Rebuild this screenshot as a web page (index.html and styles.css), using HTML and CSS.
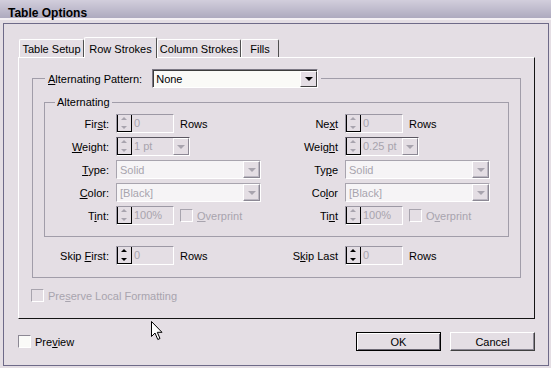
FILE: index.html
```html
<!DOCTYPE html>
<html lang="en">
<head>
    <meta charset="UTF-8">
    <title>Table Options</title>
    <link rel="stylesheet" href="styles.css">
</head>
<body>
    <div class="window">
        <div class="titlebar">Table Options</div>
        <div class="frame">
            <div class="tabs">
                <div class="tab tab-setup">Table Setup</div>
                <div class="tab tab-rows active">Row Strokes</div>
                <div class="tab tab-cols">Column Strokes</div>
                <div class="tab tab-fills">Fills</div>
            </div>

            <div class="panel">
                <fieldset class="group pattern">
                    <legend>
                        <span class="legend-row">
                            <span class="label"><u>A</u>lternating Pattern:</span>
                            <span class="select pattern-select">
                                <span class="value">None</span>
                                <span class="drop"><i class="tri-down"></i></span>
                            </span>
                        </span>
                    </legend>

                    <fieldset class="group alternating">
                        <legend>Alternatin<u>g</u></legend>
                        <div class="fields">
                            <span class="label">Fir<u>s</u>t:</span>
                            <span class="cell">
                                <span class="spin off"><span class="spin-btns"><i class="tri-up"></i><i class="tri-down"></i></span><span class="value">0</span></span>
                                <span>Rows</span>
                            </span>
                            <span class="label">Ne<u>x</u>t</span>
                            <span class="cell">
                                <span class="spin off"><span class="spin-btns"><i class="tri-up"></i><i class="tri-down"></i></span><span class="value">0</span></span>
                                <span>Rows</span>
                            </span>

                            <span class="label"><u>W</u>eight:</span>
                            <span class="cell">
                                <span class="combo off"><span class="spin-btns"><i class="tri-up"></i><i class="tri-down"></i></span><span class="value">1 pt</span><span class="drop"><i class="tri-down"></i></span></span>
                            </span>
                            <span class="label">Weig<u>h</u>t</span>
                            <span class="cell">
                                <span class="combo off"><span class="spin-btns"><i class="tri-up"></i><i class="tri-down"></i></span><span class="value">0.25 pt</span><span class="drop"><i class="tri-down"></i></span></span>
                            </span>

                            <span class="label"><u>T</u>ype:</span>
                            <span class="cell">
                                <span class="select off long"><span class="value">Solid</span><span class="drop"><i class="tri-down"></i></span></span>
                            </span>
                            <span class="label">Ty<u>p</u>e</span>
                            <span class="cell">
                                <span class="select off long"><span class="value">Solid</span><span class="drop"><i class="tri-down"></i></span></span>
                            </span>

                            <span class="label"><u>C</u>olor:</span>
                            <span class="cell">
                                <span class="select off long"><span class="value">[Black]</span><span class="drop"><i class="tri-down"></i></span></span>
                            </span>
                            <span class="label">Co<u>l</u>or</span>
                            <span class="cell">
                                <span class="select off long"><span class="value">[Black]</span><span class="drop"><i class="tri-down"></i></span></span>
                            </span>

                            <span class="label">T<u>i</u>nt:</span>
                            <span class="cell">
                                <span class="spin off"><span class="spin-btns"><i class="tri-up"></i><i class="tri-down"></i></span><span class="value">100%</span></span>
                                <span class="checkline off"><span class="check"></span><span><u>O</u>verprint</span></span>
                            </span>
                            <span class="label">Ti<u>n</u>t</span>
                            <span class="cell">
                                <span class="spin off"><span class="spin-btns"><i class="tri-up"></i><i class="tri-down"></i></span><span class="value">100%</span></span>
                                <span class="checkline off"><span class="check"></span><span>O<u>v</u>erprint</span></span>
                            </span>
                        </div>
                    </fieldset>

                    <div class="fields skip">
                        <span class="label">Skip <u>F</u>irst:</span>
                        <span class="cell">
                            <span class="spin"><span class="spin-btns"><i class="tri-up"></i><i class="tri-down"></i></span><span class="value">0</span></span>
                            <span>Rows</span>
                        </span>
                        <span class="label">S<u>k</u>ip Last</span>
                        <span class="cell">
                            <span class="spin"><span class="spin-btns"><i class="tri-up"></i><i class="tri-down"></i></span><span class="value">0</span></span>
                            <span>Rows</span>
                        </span>
                    </div>
                </fieldset>

                <div class="checkline off preserve"><span class="check"></span><span>Pre<u>s</u>erve Local Formatting</span></div>
            </div>

            <div class="footer">
                <div class="checkline preview"><span class="check"></span><span>Pre<u>v</u>iew</span></div>
                <div class="buttons">
                    <button class="default">OK</button>
                    <button>Cancel</button>
                </div>
            </div>
        </div>

        <svg class="cursor" width="13" height="20" viewBox="0 0 13 20">
            <path d="M0.5 0.5 L0.5 15.5 L4 12 L6.8 18.5 L9 17.5 L6.3 11.3 L11 11.3 Z" fill="#fff" stroke="#000" stroke-width="1"/>
        </svg>
    </div>
</body>
</html>
```

FILE: styles.css
```css
* {
    margin: 0;
    padding: 0;
    box-sizing: border-box;
}

body {
    background-color: #e4dee4;
    font-family: 'Liberation Sans', Arial, sans-serif;
    font-size: 11px;
    color: #000;
}

.window {
    position: relative;
    width: 551px;
    height: 368px;
    overflow: hidden;
    background-color: #e4dee4;
}

.titlebar {
    height: 20px;
    padding: 6px 0 0 8px;
    font-size: 12px;
    font-weight: bold;
    line-height: 14px;
    background: linear-gradient(#d2cedc, #aeaabf);
    border-bottom: 2px solid #f4f0f4;
}

.frame {
    height: 343px;
    margin: 3px 2px 0 3px;
    padding: 13px 13px 0 14px;
    border: 1px solid #6e6a88;
}

/* tabs */
.tabs {
    display: flex;
    align-items: flex-end;
    height: 20px;
    padding-left: 1px;
    position: relative;
    z-index: 1;
}

.tab {
    height: 18px;
    padding-top: 1px;
    line-height: 16px;
    text-align: center;
    border-top: 1px solid #fff;
    border-left: 1px solid #fff;
    border-right: 1px solid #505050;
    border-radius: 2px 2px 0 0;
    background-color: #e4dee4;
}

.tab.active {
    height: 21px;
    margin-bottom: -1px;
    padding-top: 3px;
}

.tab-setup { width: 65px; }
.tab-rows { width: 73px; }
.tab-cols { width: 84px; }
.tab-fills { width: 38px; }

.panel {
    width: 517px;
    height: 262px;
    border-top: 1px solid #fff;
    border-left: 1px solid #fff;
    border-right: 1px solid #141414;
    border-bottom: 1px solid #141414;
    padding: 11px 13px 0 13px;
}

/* group boxes */
.group {
    border: 1px solid #a19da9;
    padding: 0;
    margin: 0;
    min-width: 0;
}

.group > legend {
    padding: 0 3px;
    line-height: 14px;
}

.pattern {
    padding-bottom: 12px;
}

.pattern > legend {
    margin-left: 12px;
}

.legend-row {
    display: flex;
    align-items: center;
    gap: 10px;
    height: 19px;
}

.alternating {
    margin: 7px 11px 0 11px;
    padding: 5px 0 11px 0;
}

.alternating > legend {
    margin-left: 10px;
    padding: 0 2px;
}

.fields {
    display: grid;
    grid-template-columns: 64px 150px 65px 1fr;
    grid-auto-rows: 19px;
    column-gap: 7px;
    row-gap: 4px;
    align-items: center;
}

.fields > .label {
    justify-self: end;
    white-space: nowrap;
}

.fields .cell {
    display: flex;
    align-items: center;
    gap: 6px;
}

.skip {
    margin-top: 9px;
    padding-left: 12px;
}

/* inputs */
.value {
    flex: 1;
    padding-left: 2px;
    line-height: 17px;
    white-space: nowrap;
    overflow: hidden;
}

.tri-up, .tri-down {
    display: block;
    width: 0;
    height: 0;
    border-left: 3px solid transparent;
    border-right: 3px solid transparent;
}

.tri-up { border-bottom: 3px solid #000; }
.tri-down { border-top: 3px solid #000; }

.drop .tri-down {
    border-left-width: 4px;
    border-right-width: 4px;
    border-top-width: 4px;
}

.select {
    display: flex;
    height: 19px;
    border: 1px solid;
    border-color: #7c7884 #fff #fff #7c7884;
    background-color: #fafaf7;
    box-shadow: inset 1px 1px 0 #3c3c3c;
}

.select .value {
    padding-left: 3px;
    padding-top: 1px;
}

.pattern-select {
    width: 166px;
}

.drop {
    width: 17px;
    display: flex;
    align-items: center;
    justify-content: center;
    border: 1px solid;
    border-color: #fff #404040 #404040 #fff;
    background-color: #e4dee4;
    margin: 1px 0 0 0;
}

.long {
    width: 145px;
}

.spin, .combo {
    display: flex;
    height: 19px;
    border: 1px solid;
    border-color: #9c98a4 #fff #fff #9c98a4;
}

.spin { width: 58px; }
.combo {
    width: 74px;
    border-top-color: #5a5660;
}

.spin-btns {
    width: 15px;
    display: flex;
    flex-direction: column;
    border-left: 1px solid #000;
    border-right: 1px solid #000;
    border-bottom: 1px solid #000;
    background-color: #e4dee4;
}

.spin-btns .tri-up,
.spin-btns .tri-down {
    flex: 1;
    height: auto;
    border: none;
    position: relative;
}

.spin-btns .tri-up {
    border-bottom: 1px solid #fff;
}

.spin-btns .tri-up::after,
.spin-btns .tri-down::after {
    content: '';
    position: absolute;
    left: 3px;
    border-left: 3px solid transparent;
    border-right: 3px solid transparent;
}

.spin-btns .tri-up::after {
    top: 2px;
    border-bottom: 3px solid #000;
}

.spin-btns .tri-down::after {
    top: 2px;
    border-top: 3px solid #000;
}

.spin .value, .combo .value {
    color: #a8a4ae;
}

.combo .drop {
    width: 16px;
    margin: 0;
    border-color: #fff #8c8894 #8c8894 #fff;
}

/* disabled state */
.off .value,
.checkline.off {
    color: #a8a4ae;
}

.select.off {
    border-color: #a8a4ae #fff #fff #a8a4ae;
    background-color: #f6f4f6;
    box-shadow: none;
}

.select.off .drop {
    margin: 0;
    border-color: #fff #8c8894 #8c8894 #fff;
    box-shadow: inset -1px -1px 0 #bcb8c2;
}

.off .tri-down { border-top-color: #a8a4ae; }
.off .spin-btns .tri-up::after { border-bottom-color: #a8a4ae; }
.off .spin-btns .tri-down::after { border-top-color: #a8a4ae; }

/* checkboxes */
.checkline {
    display: flex;
    align-items: center;
    gap: 4px;
    white-space: nowrap;
}

.check {
    display: block;
    width: 13px;
    height: 13px;
    border: 1px solid;
    border-color: #8c8894 #fff #fff #8c8894;
    background-color: #fafaf8;
}

.off .check {
    border-color: #a8a4ae #fff #fff #a8a4ae;
    background-color: #e4dee4;
}

.preserve {
    margin: 10px 0 0 -1px;
    height: 15px;
}

/* footer */
.footer {
    display: flex;
    align-items: center;
    justify-content: space-between;
    margin-top: 13px;
    height: 19px;
}

.buttons {
    display: flex;
    gap: 9px;
}

button {
    width: 85px;
    height: 19px;
    font-family: 'Liberation Sans', Arial, sans-serif;
    font-size: 11px;
    color: #000;
    background-color: #e4dee4;
    border: 1px solid;
    border-color: #fff #404040 #404040 #fff;
    box-shadow: inset -1px -1px 0 #8c8894;
}

button.default {
    border-color: #000;
    box-shadow: inset 1px 1px 0 #fff, inset -1px -1px 0 #6c6874;
}

.cursor {
    position: absolute;
    left: 151px;
    top: 321px;
}
```
